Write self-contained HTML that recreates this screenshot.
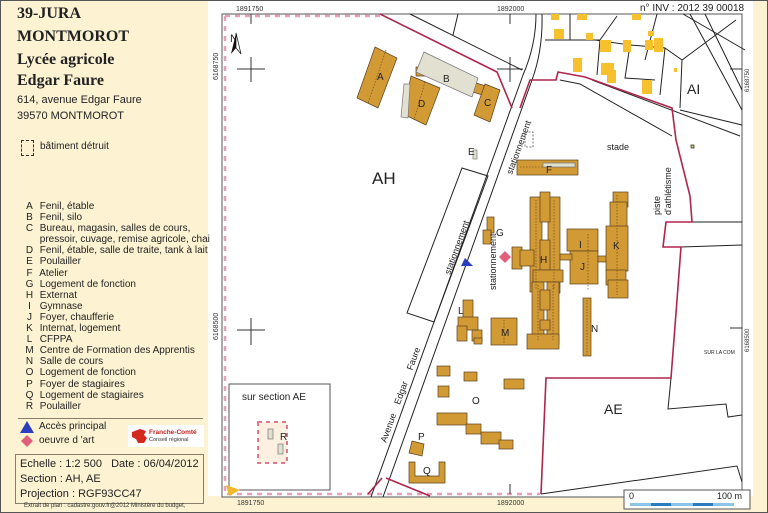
<!DOCTYPE html>
<html><head><meta charset="utf-8"><style>
*{margin:0;padding:0}
body{width:768px;height:513px;overflow:hidden;background:#fdf3d3;font-family:"Liberation Sans",sans-serif;position:relative}
#frame{position:absolute;left:0;top:0;width:766px;height:511px;border:1px solid #555}
.t{position:absolute;left:17px;font-family:"Liberation Serif",serif;font-weight:bold;color:#222;font-size:16px}
.a{position:absolute;left:17px;font-size:11px;color:#222}
.lg{position:absolute;left:22px;font-size:10px;color:#222;line-height:11.1px;top:201px}
.lg span{display:inline-block;width:15px;text-align:center}
</style></head><body>
<div id="frame"></div>
<div style="position:absolute;left:208px;top:1px;width:545px;height:495px;background:#fff"></div>
<div class="t" style="top:5px">39-JURA</div>
<div class="t" style="top:28px">MONTMOROT</div>
<div class="t" style="top:51px">Lycée agricole</div>
<div class="t" style="top:72px">Edgar Faure</div>
<div class="a" style="top:94px">614, avenue Edgar Faure</div>
<div class="a" style="top:110px">39570 MONTMOROT</div>
<div style="position:absolute;left:21px;top:140px;width:11px;height:14px;border:1px dashed #333"></div>
<div class="a" style="left:40px;top:141px;font-size:10px">bâtiment détruit</div>
<div class="lg"><span>A</span> Fenil, étable<br><span>B</span> Fenil, silo<br><span>C</span> Bureau, magasin, salles de cours,<br><span></span> pressoir, cuvage, remise agricole, chai<br><span>D</span> Fenil, étable, salle de traite, tank à lait<br><span>E</span> Poulailler<br><span>F</span> Atelier<br><span>G</span> Logement de fonction<br><span>H</span> Externat<br><span>I</span> Gymnase<br><span>J</span> Foyer, chaufferie<br><span>K</span> Internat, logement<br><span>L</span> CFPPA<br><span>M</span> Centre de Formation des Apprentis<br><span>N</span> Salle de cours<br><span>O</span> Logement de fonction<br><span>P</span> Foyer de stagiaires<br><span>Q</span> Logement de stagiaires<br><span>R</span> Poulailler</div>
<div style="position:absolute;left:18px;top:418px;width:185px;height:1px;background:#8a7f6a"></div>
<svg style="position:absolute;left:0;top:0" width="210" height="513">
<polygon points="27,421 34,433 20,433" fill="#2a3fc0"/>
<polygon points="27,435 33,441 27,447 21,441" fill="#e0607a"/>
<rect x="128" y="425" width="76" height="22" fill="#fff"/>
<path d="M132,432 l8,-3 6,2 -2,4 3,3 -3,5 -6,0 -2,-4 -4,-2z" fill="#d42a1e"/>
</svg>
<div class="a" style="left:39px;top:421px;font-size:10px">Accès principal</div>
<div class="a" style="left:39px;top:435px;font-size:10px">oeuvre d 'art</div>
<div style="position:absolute;left:149px;top:429px;font-size:6.5px;font-weight:bold;color:#c02020">Franche-Comté</div>
<div style="position:absolute;left:149px;top:437px;font-size:5.5px;color:#333">Conseil régional</div>
<div style="position:absolute;left:15px;top:454px;width:187px;height:48px;border:1px solid #8a7f6a"></div>
<div class="a" style="left:20px;top:458px">Echelle : 1:2 500 &nbsp;&nbsp;Date : 06/04/2012</div>
<div class="a" style="left:20px;top:473px">Section : AH, AE</div>
<div class="a" style="left:20px;top:488px">Projection : RGF93CC47</div>
<div style="position:absolute;left:24px;top:503px;font-size:6px;color:#333">Extrait de plan : cadastre.gouv.fr@2012 Ministère du budget,</div>
<svg style="position:absolute;left:0;top:0" width="768" height="513" font-family="Liberation Sans,sans-serif">
<rect x="222" y="14" width="520" height="483" fill="#fff" stroke="#555" stroke-width="1"/>
<path d="M225,16 V494 H540" fill="none" stroke="#e8a0b8" stroke-width="2.5" stroke-dasharray="5,5"/>
<path d="M225,16 H380" fill="none" stroke="#e8a0b8" stroke-width="2.5" stroke-dasharray="5,5"/>
<text x="236" y="11" font-size="7" fill="#333">1891750</text>
<text x="497" y="11" font-size="7" fill="#333">1892000</text>
<text x="497" y="505" font-size="7" fill="#333">1892000</text>
<text x="237" y="505" font-size="7" fill="#333">1891750</text>
<text x="640" y="11" font-size="10" fill="#222">n° INV : 2012 39 00018</text>
<text transform="translate(218,80) rotate(-90)" font-size="7" fill="#333">6168750</text>
<text transform="translate(218,340) rotate(-90)" font-size="7" fill="#333">6168500</text>
<text transform="translate(749,92) rotate(-90)" font-size="6" fill="#333">6168750</text>
<text transform="translate(749,352) rotate(-90)" font-size="6" fill="#333">6168500</text>
<g stroke="#333" stroke-width="1">
<path d="M251,14V24M237,69H265M251,57V82M251,318V345M237,330H265M510,14V24M497,69H523M510,57V82M510,484V494M730,69H742M730,328H742"/>
</g>
<text x="230" y="42" font-size="11" fill="#222">N</text>
<path d="M236,33 L231,54 L236,48Z" fill="#111"/><path d="M236,33 L241,54 L236,48Z" fill="#fff" stroke="#111" stroke-width=".7"/>
<g fill="none" stroke="#222" stroke-width="1">
<path d="M410,14 L522,70"/><path d="M458,14 L453,35"/>
<path d="M570,14 L570,40 L600,40 L597,75"/><path d="M570,40 L545,40"/>
<path d="M595,40 L630,45 L625,78 L655,80"/><path d="M630,45 L665,48 L660,95"/>
<path d="M600,40 L617,16"/><path d="M657,14 L645,60"/><path d="M665,48 L682,60 L680,108"/>
<path d="M683,14 L745,50"/><path d="M690,14 L742,110 M705,14 L742,90"/>
<path d="M682,60 L736,20"/>
<path d="M680,110 L742,125"/>
<path d="M560,80 L580,84 L672,136"/>
<path d="M592,80 L740,136"/>
<path d="M692,222 L742,222 M681,247 L742,245"/>
<path d="M671,378 L668,409 L726,404 L728,417 L742,415"/>
<path d="M541,494 L737,466 L742,482"/>
<path d="M371,497 L523,75 Q536,45 536,14"/><path d="M383,497 L532,80 Q543,50 542,14"/>
<path d="M462,168 L488,176 L434,322 L407,313 Z"/>
</g>
<g fill="none" stroke="#b0254b" stroke-width="1.6">
<path d="M380,14 L497,72 L512,108"/>
<path d="M520,108 L530,80 L556,80 L558,72 L585,77 L672,108 L676,140 L690,196 L692,222 L666,222 L663,247 L681,247 L677,300 L671,378 L546,378 L541,494"/>
<path d="M382,478 L368,494 M386,478 L430,496"/>
</g>
<g fill="#f7c12e">
<rect x="554" y="29" width="10" height="10"/>
<rect x="573" y="58" width="9" height="14"/><rect x="586" y="33" width="7" height="7"/>
<rect x="551" y="14" width="8" height="6"/><rect x="577" y="14" width="10" height="6"/><rect x="632" y="14" width="9" height="6"/>
<rect x="654" y="38" width="9" height="14"/><rect x="601" y="63" width="13" height="12"/><rect x="607" y="70" width="9" height="13"/>
<rect x="600" y="40" width="11" height="12"/><rect x="645" y="40" width="8" height="10"/>
<rect x="623" y="40" width="8" height="12"/><rect x="648" y="31" width="6" height="5"/>
<rect x="642" y="80" width="10" height="14"/><rect x="674" y="68" width="3" height="4"/>
</g>
<rect x="691" y="145" width="3" height="3" fill="#cfc27a" stroke="#222" stroke-width=".7"/>
<g fill="#d29a35" stroke="#5a4020" stroke-width=".7">
<polygon points="375,47 397,58 378,108 357,98"/>
<polygon points="416,67 426,67 426,76 416,76"/>
<polygon points="411,76 440,88 426,125 403,114"/>
<polygon points="476,83 486,86 482,95 473,92"/>
<polygon points="485,84 500,90 490,122 474,115"/>
<rect x="517" y="160" width="61" height="15"/>
<rect x="530" y="197" width="12" height="95"/><rect x="548" y="197" width="12" height="96"/><rect x="540" y="192" width="10" height="30"/>
<rect x="540" y="240" width="10" height="30"/><rect x="533" y="270" width="30" height="12"/>
<rect x="532" y="282" width="12" height="62"/><rect x="547" y="282" width="12" height="62"/><rect x="540" y="290" width="10" height="20"/><rect x="540" y="320" width="10" height="10"/>
<rect x="527" y="334" width="32" height="15"/>
<rect x="512" y="247" width="10" height="22"/><rect x="520" y="250" width="14" height="16"/>
<rect x="567" y="229" width="31" height="22"/><rect x="570" y="251" width="28" height="33"/><rect x="560" y="254" width="12" height="6"/>
<rect x="598" y="256" width="12" height="6"/>
<rect x="613" y="192" width="15" height="15"/><rect x="610" y="202" width="17" height="25"/><rect x="606" y="226" width="22" height="45"/>
<rect x="606" y="270" width="20" height="15"/><rect x="608" y="280" width="20" height="18"/>
<rect x="583" y="298" width="8" height="58"/>
<rect x="487" y="217" width="7" height="16"/><rect x="483" y="230" width="8" height="14"/>
<rect x="491" y="318" width="26" height="27"/>
<rect x="463" y="300" width="10" height="18"/><rect x="458" y="317" width="20" height="13"/><rect x="457" y="326" width="10" height="15"/><rect x="472" y="330" width="10" height="11"/><rect x="474" y="338" width="8" height="6"/>
<rect x="437" y="366" width="13" height="10"/><rect x="438" y="386" width="11" height="11"/>
<rect x="464" y="372" width="13" height="9"/><rect x="504" y="379" width="20" height="10"/>
<rect x="437" y="413" width="30" height="12"/><rect x="466" y="424" width="15" height="10"/><rect x="481" y="432" width="20" height="12"/><rect x="499" y="440" width="14" height="9"/>
<polygon points="412,441 424,444 422,456 409,453"/>
<path d="M409,462 h6 v14 h24 v-14 h6 v21 h-36z"/>
</g>
<g fill="none" stroke="#5a4020" stroke-width=".6" stroke-dasharray="1.5,1.5">
<path d="M536,200V290M554,200V290M538,285V340M553,285V340M520,167H575M588,234V290M617,195V295M587,300V355M504,320V343M386,50L368,103M425,82L414,120"/>
</g>
<g fill="#e2e0d0" stroke="#777" stroke-width=".7">
<polygon points="424,52 478,78 472,97 416,72"/>
<polygon points="404,84 410,84 408,118 401,117"/>
<rect x="473" y="150" width="4" height="9"/>
<rect x="543" y="163" width="32" height="4"/>
</g>
<rect x="525" y="132" width="8" height="15" fill="none" stroke="#555" stroke-dasharray="2,1.5" stroke-width=".8"/>
<polygon points="465,258 473,266 461,266" fill="#2a3fc0"/>
<polygon points="505,251 511,257 505,263 499,257" fill="#e0607a"/>
<g font-size="10" fill="#222">
<text x="377" y="80">A</text><text x="443" y="82">B</text><text x="484" y="106">C</text><text x="418" y="107">D</text>
<text x="468" y="155">E</text><text x="546" y="173">F</text><text x="496" y="236">G</text><text x="540" y="263">H</text>
<text x="579" y="248">I</text><text x="580" y="270">J</text><text x="613" y="249">K</text><text x="458" y="314">L</text>
<text x="501" y="336">M</text><text x="591" y="332">N</text><text x="472" y="404">O</text><text x="418" y="440">P</text><text x="423" y="474">Q</text>
<text x="607" y="150" font-size="9">stade</text>
<text x="372" y="184" font-size="17">AH</text><text x="687" y="94" font-size="14">AI</text><text x="604" y="414" font-size="14">AE</text>
<text x="704" y="354" font-size="5">SUR LA COM</text>
<text transform="translate(450,275) rotate(-70)" font-size="9">stationnement</text>
<text transform="translate(512,175) rotate(-70)" font-size="9">stationnement</text>
<text transform="translate(496,290) rotate(-90)" font-size="9">stationnement</text>
<text transform="translate(386,443) rotate(-70)" font-size="9">Avenue&#160;&#160;&#160;&#160;Edgar&#160;&#160;&#160;&#160;&#160;Faure</text>
<text transform="translate(660,215) rotate(-90)" font-size="9">piste</text>
<text transform="translate(671,215) rotate(-90)" font-size="9">d'athlétisme</text>
</g>
<rect x="229" y="384" width="101" height="106" fill="#fff" stroke="#555"/>
<text x="242" y="400" font-size="10" fill="#222">sur section AE</text>
<rect x="258" y="422" width="29" height="41" fill="#fdf0e0" stroke="#e07890" stroke-width="2" stroke-dasharray="4,4"/>
<rect x="268" y="429" width="5" height="10" fill="#e2e0d0" stroke="#777" stroke-width=".7"/>
<rect x="278" y="444" width="5" height="10" fill="#e2e0d0" stroke="#777" stroke-width=".7"/>
<text x="280" y="440" font-size="10" fill="#222">R</text>
<path d="M226,485 L240,490 L229,496Z" fill="#f2b92e"/>
<rect x="624" y="490" width="126" height="19" fill="#fff" stroke="#555"/>
<text x="629" y="499" font-size="9" fill="#222">0</text><text x="717" y="499" font-size="9" fill="#222">100 m</text>
<rect x="630" y="503" width="104" height="3" fill="#8cc4e8"/>
<rect x="651" y="503" width="20" height="3" fill="#2a7bc0"/><rect x="693" y="503" width="20" height="3" fill="#2a7bc0"/>
</svg>
</body></html>
